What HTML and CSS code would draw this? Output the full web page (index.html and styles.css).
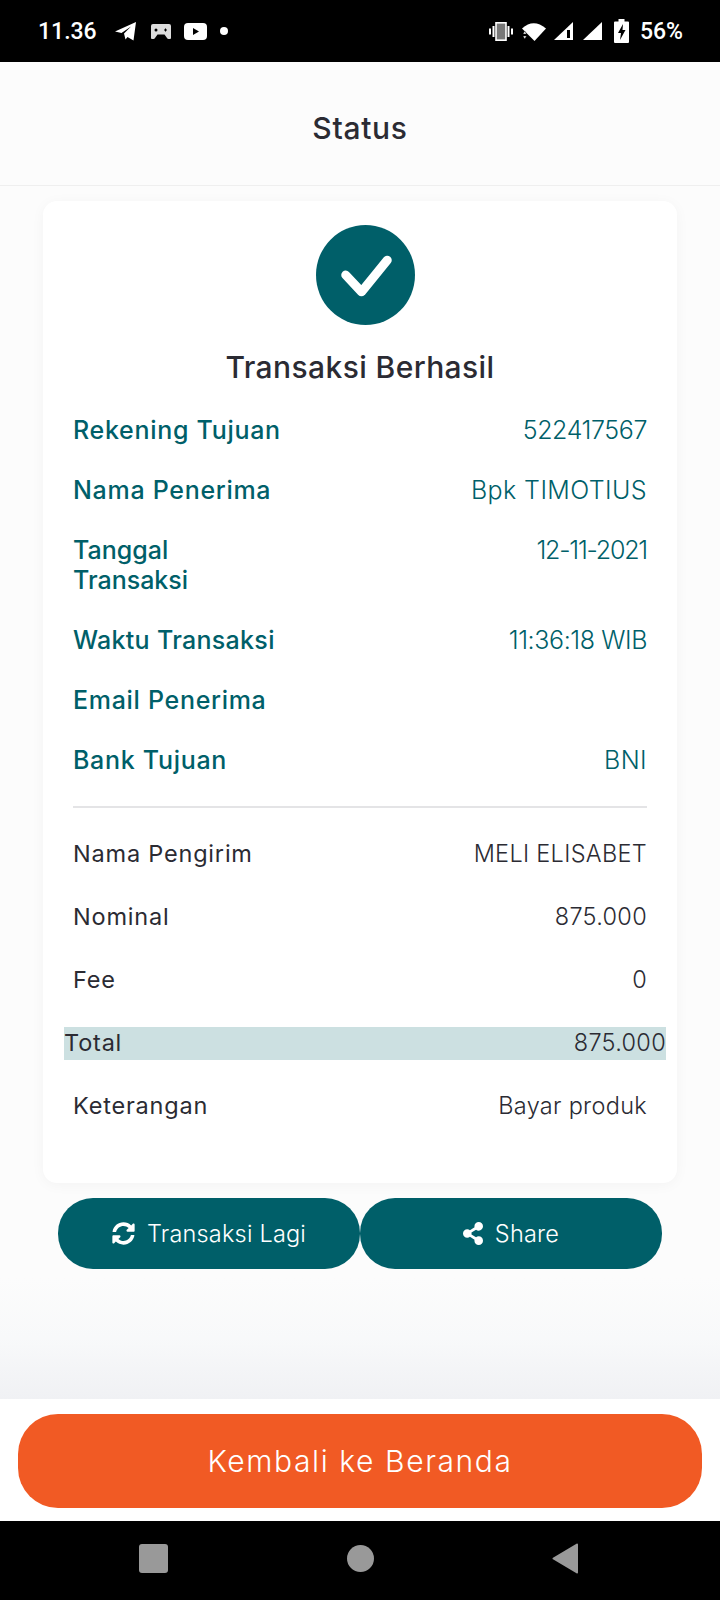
FILE: index.html
```html
<!DOCTYPE html>
<html>
<head>
    <title>Status</title>
    <link rel="stylesheet" href="styles.css">
</head>
<body>
<div class="status-bar">
    <div class="status-left">
        <span class="clock">11.36</span>
        <svg class="ic-telegram" viewBox="0 0 21 19"><path d="M0 9.5 21 0 18.5 18.5 12.5 15 10.5 17.5 9 11.5 16 4.500 6.500 11z" fill="#fff"/></svg>
        <svg class="ic-game" viewBox="0 0 20 15"><path d="M2 0h16q2 0 2 2v12q0 1-1 1h-1.500q-1 0-1.500-1l-2.500-3.500h-7L4 14q-.5 1-1.500 1H1q-1 0-1-1V2q0-2 2-2z" fill="#ddd"/><circle cx="5" cy="6" r="1.500" fill="#000"/><path d="M14 4.500h1v1h1v1h-1v1h-1v-1h-1v-1h1z" fill="#000"/></svg>
        <svg class="ic-youtube" viewBox="0 0 23 17"><rect width="23" height="17" rx="4" fill="#fff"/><path d="M9 5l6 3.500-6 3.500z" fill="#000"/></svg>
        <span class="dot"></span>
    </div>
    <div class="status-right">
        <svg class="ic-vibrate" viewBox="0 0 24 19"><rect x="7" y="0.800" width="10" height="17.400" fill="#777" stroke="#fff" stroke-width="1.600"/><path d="M3.500 4h2v11h-2zM18.500 4h2v11h-2zM0 6.500h2v6H0zM22 6.500h2v6h-2z" fill="#fff"/></svg>
        <svg class="ic-wifi" viewBox="0 0 24 19"><path d="M0 6.500Q11.500-4 24 6.500L12.500 19z" fill="#fff"/><path d="M0 12l3.500 0-1.750-3zM0 14l3.500 0-1.750 3z" transform="translate(1 0)" fill="#fff" stroke="#000" stroke-width=".4"/></svg>
        <svg class="ic-signal" viewBox="0 0 19 18"><path d="M0 18 19 0v18z" fill="#fff"/><path d="M13 8h3v8h-3z" fill="#000"/></svg>
        <svg class="ic-signal" viewBox="0 0 19 18"><path d="M0 18 19 0v18z" fill="#fff"/></svg>
        <svg class="ic-battery" viewBox="0 0 15 24"><path d="M4.500 0h6v2.500H14q1 0 1 1V23q0 1-1 1H1q-1 0-1-1V3.500q0-1 1-1h3.500z" fill="#fff"/><path d="M9 5 4 14h3l-1 7 5.500-10H8.500z" fill="#000"/></svg>
        <span class="battery-text">56%</span>
    </div>
</div>

<div class="header">Status</div>

<div class="main">
    <div class="card">
        <div class="check-circle">
            <svg viewBox="0 0 100 100"><path d="M30 50 46 67 72 35" fill="none" stroke="#fff" stroke-width="9" stroke-linecap="round" stroke-linejoin="round"/></svg>
        </div>
        <h2 class="title">Transaksi Berhasil</h2>

        <div class="info-list">
            <div class="info-row"><span class="info-label">Rekening Tujuan</span><span class="info-value num">522417567</span></div>
            <div class="info-row"><span class="info-label">Nama Penerima</span><span class="info-value">Bpk TIMOTIUS</span></div>
            <div class="info-row"><span class="info-label narrow">Tanggal Transaksi</span><span class="info-value date">12-11-2021</span></div>
            <div class="info-row"><span class="info-label tight">Waktu Transaksi</span><span class="info-value num">11:36:18 WIB</span></div>
            <div class="info-row"><span class="info-label">Email Penerima</span><span class="info-value"></span></div>
            <div class="info-row"><span class="info-label">Bank Tujuan</span><span class="info-value">BNI</span></div>
        </div>

        <hr class="divider">

        <div class="detail-list">
            <div class="detail-row"><span class="detail-label">Nama Pengirim</span><span class="detail-value">MELI ELISABET</span></div>
            <div class="detail-row"><span class="detail-label">Nominal</span><span class="detail-value">875.000</span></div>
            <div class="detail-row"><span class="detail-label">Fee</span><span class="detail-value">0</span></div>
            <div class="detail-row total"><span class="detail-label">Total</span><span class="detail-value">875.000</span></div>
            <div class="detail-row"><span class="detail-label">Keterangan</span><span class="detail-value">Bayar produk</span></div>
        </div>
    </div>

    <div class="actions">
        <button class="action-btn">
            <svg class="ic-sync" viewBox="0 0 512 512"><path d="M370.72 133.28C339.458 104.008 298.888 87.962 255.848 88c-77.458.068-144.328 53.178-162.791 126.85-1.344 5.363-6.122 9.15-11.651 9.15H24.103c-7.498 0-13.194-6.807-11.807-14.176C33.933 94.924 134.813 8 256 8c66.448 0 126.791 26.136 171.315 68.685L463.03 40.97C478.149 25.851 504 36.559 504 57.941V192c0 13.255-10.745 24-24 24H345.941c-21.382 0-32.09-25.851-16.971-40.971l41.75-41.749zM32 296h134.059c21.382 0 32.09 25.851 16.971 40.971l-41.75 41.75c31.262 29.273 71.835 45.319 114.876 45.28 77.418-.07 144.315-53.144 162.787-126.849 1.344-5.363 6.122-9.15 11.651-9.15h57.304c7.498 0 13.194 6.807 11.807 14.176C478.067 417.076 377.187 504 256 504c-66.448 0-126.791-26.136-171.315-68.685L48.97 471.03C33.851 486.149 8 475.441 8 454.059V320c0-13.255 10.745-24 24-24z" fill="#fff"/></svg>
            Transaksi Lagi
        </button>
        <button class="action-btn">
            <svg class="ic-share" viewBox="0 0 448 512"><path d="M352 320c-22.608 0-43.387 7.819-59.79 20.895l-102.486-64.054a96.551 96.551 0 0 0 0-41.683l102.486-64.054C308.613 184.181 329.392 192 352 192c53.019 0 96-42.981 96-96S405.019 0 352 0s-96 42.981-96 96c0 7.158.79 14.13 2.276 20.841L155.79 180.895C139.387 167.819 118.608 160 96 160c-53.019 0-96 42.981-96 96s42.981 96 96 96c22.608 0 43.387-7.819 59.79-20.895l102.486 64.054A96.301 96.301 0 0 0 256 416c0 53.019 42.981 96 96 96s96-42.981 96-96-42.981-96-96-96z" fill="#fff"/></svg>
            Share
        </button>
    </div>
</div>

<div class="bottom-bar">
    <button class="home-btn">Kembali ke Beranda</button>
</div>

<div class="nav-bar">
    <span class="nav-square"></span>
    <span class="nav-circle"></span>
    <svg class="nav-back" viewBox="0 0 27 31"><path d="M25 1.500 1.500 15.500 25 29.500z" fill="#999" stroke="#999" stroke-width="2" stroke-linejoin="round"/></svg>
</div>
</body>
</html>
```

FILE: styles.css
```css
* {
    margin: 0;
    padding: 0;
    box-sizing: border-box;
}

body {
    display: flex;
    flex-direction: column;
    height: 1600px;
    width: 720px;
    font-family: 'Inter', 'Open Sans', sans-serif;
    background: #fff;
    overflow: hidden;
}

/* status bar */
.status-bar {
    height: 62px;
    background: #000;
    color: #fff;
    display: flex;
    justify-content: space-between;
    align-items: center;
    padding: 0 37px 0 38px;
    font-family: 'Roboto', sans-serif;
    font-size: 23px;
    font-weight: 500;
}

.status-left, .status-right {
    display: flex;
    align-items: center;
}

.clock {
    width: 77px;
}

.ic-telegram { width: 21px; height: 19px; margin-right: 15px; }
.ic-game { width: 20px; height: 15px; margin-right: 13px; }
.ic-youtube { width: 23px; height: 17px; margin-right: 13px; }

.dot {
    width: 8px;
    height: 8px;
    border-radius: 50%;
    background: #fff;
}

.ic-vibrate { width: 24px; height: 19px; margin-right: 9px; }
.ic-wifi { width: 24px; height: 19px; margin-right: 8px; }
.ic-signal { width: 19px; height: 18px; margin-right: 10px; }
.ic-battery { width: 15px; height: 24px; margin: 0 11px 0 2px; }

/* header */
.header {
    height: 124px;
    background: #fcfcfc;
    border-bottom: 1px solid #efefef;
    display: flex;
    justify-content: center;
    align-items: center;
    font-size: 30px;
    font-weight: 500;
    letter-spacing: 0.7px;
    color: #2b2b33;
    padding-top: 9px;
}

/* main content */
.main {
    flex: 1;
    background: linear-gradient(180deg, #fcfcfc 0%, #fcfcfc 90%, #f8f9fa 95%, #f0f1f4 100%);
    padding-top: 15px;
}

.card {
    width: 634px;
    height: 982px;
    margin: 0 auto;
    background: #fff;
    border-radius: 14px;
    box-shadow: 0 2px 14px rgba(0, 0, 0, 0.04);
    padding: 24px 30px 0;
}

.check-circle {
    width: 99px;
    height: 100px;
    border-radius: 50%;
    background: #005f69;
    margin: 0 auto;
    position: relative;
    left: 5px;
}

.check-circle svg {
    display: block;
    width: 99px;
    height: 100px;
}

.title {
    font-size: 30px;
    line-height: 40px;
    font-weight: 500;
    letter-spacing: 0.4px;
    color: #2b2b33;
    text-align: center;
    margin-top: 22px;
}

.info-list {
    display: flex;
    flex-direction: column;
    gap: 30px;
    margin-top: 28px;
}

.info-row {
    display: flex;
    justify-content: space-between;
    font-size: 25px;
    line-height: 30px;
    color: #005f69;
}

.info-label {
    font-weight: 500;
    letter-spacing: 0.7px;
}

.info-label.narrow {
    width: 170px;
    letter-spacing: 0;
}

.info-label.tight {
    letter-spacing: 0.3px;
}

.info-value {
    font-weight: 300;
    letter-spacing: 0.4px;
}

.info-value.num {
    letter-spacing: -0.4px;
}

.info-value.date {
    letter-spacing: -1.2px;
}

.divider {
    border: none;
    border-top: 2px solid #e4e4e6;
    margin-top: 31px;
}

.detail-list {
    display: flex;
    flex-direction: column;
    gap: 30px;
    margin-top: 30px;
}

.detail-row {
    display: flex;
    justify-content: space-between;
    align-items: center;
    height: 33px;
    padding-bottom: 2px;
    font-size: 23.500px;
    color: #2b2b33;
}

.detail-label {
    font-weight: 400;
    letter-spacing: 0.8px;
}

.detail-value {
    font-weight: 300;
    letter-spacing: 0.3px;
}

.detail-row.total {
    background: #cce0e1;
    margin: 0 -19px 0 -9px;
}

/* buttons */
.actions {
    display: flex;
    margin: 15px 58px 0;
}

.action-btn {
    flex: 1;
    height: 71px;
    border: none;
    border-radius: 35px;
    background: #005f69;
    color: #fff;
    font-family: inherit;
    font-size: 23.500px;
    font-weight: 300;
    letter-spacing: 0.2px;
    display: flex;
    justify-content: center;
    align-items: center;
    gap: 12px;
}

.ic-sync { width: 23px; height: 23px; }
.ic-share { width: 20px; height: 23px; }

.bottom-bar {
    height: 122px;
    background: #fff;
    padding: 15px 18px 13px;
}

.home-btn {
    width: 684px;
    height: 94px;
    border: none;
    border-radius: 40px;
    background: #f15a24;
    color: #fff;
    font-family: inherit;
    font-size: 30px;
    font-weight: 300;
    letter-spacing: 1.600px;
}

/* navigation bar */
.nav-bar {
    height: 79px;
    background: #000;
    display: flex;
    align-items: center;
    padding: 0 0 4px 139px;
}

.nav-square {
    width: 29px;
    height: 29px;
    border-radius: 3px;
    background: #999;
    margin-right: 179px;
}

.nav-circle {
    width: 27px;
    height: 27px;
    border-radius: 50%;
    background: #999;
    margin-right: 178px;
}

.nav-back {
    width: 27px;
    height: 31px;
}
```
